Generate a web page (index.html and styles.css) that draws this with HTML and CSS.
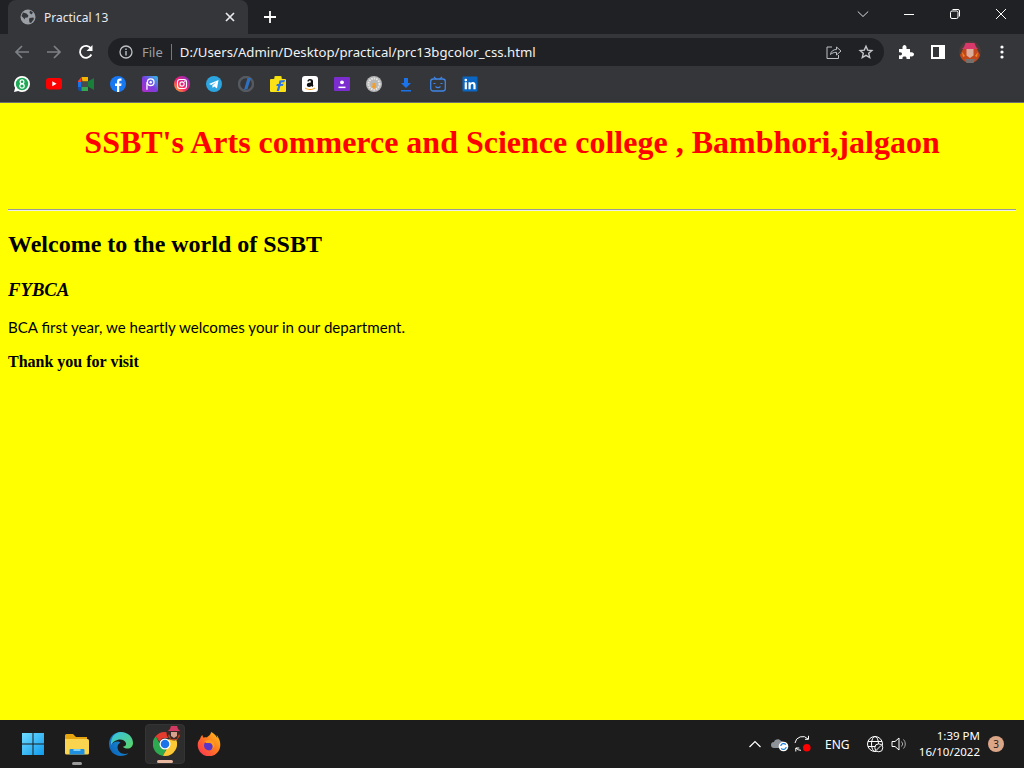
FILE: index.html
```html
<!DOCTYPE html>
<html lang="en">
<head>
<meta charset="utf-8">
<title>Practical 13</title>
<link rel="stylesheet" href="styles.css">
</head>
<body>
<div class="screen">
  <header class="chrome">
    <div class="tabstrip">
      <div class="tab">
        <svg class="i16" viewBox="0 0 16 16"><circle cx="8" cy="8" r="7.5" fill="#9aa0a6"/><path d="M3 3.500l3.500 1 2 2.200-1 1.800-2.500.2-.2 1.800L3 8.500 1.500 7zM10 1.500l3 2-1.500 2L9.500 4zM9.500 9l3.800-.5.7 1.500-3 4-1.500-.5-.5-2.500z" fill="#35363a"/></svg>
        <span class="tab-title">Practical 13</span>
        <svg class="tab-close" viewBox="0 0 10 10"><path d="M1 1l8 8M9 1l-8 8" stroke="#e8eaed" stroke-width="1.7"/></svg>
      </div>
      <svg class="newtab" viewBox="0 0 12 12"><path d="M6 0v12M0 6h12" stroke="#fff" stroke-width="1.8"/></svg>
      <div class="winctl">
        <span class="winbtn"><svg class="i12" viewBox="0 0 12 12"><path d="M.8 3.500L6 8.500l5.200-5" fill="none" stroke="#dadce0"/></svg></span>
        <span class="winbtn"><svg class="i12" viewBox="0 0 12 12"><path d="M1 6.500h10" stroke="#fff"/></svg></span>
        <span class="winbtn"><svg class="i12" viewBox="0 0 12 12"><rect x="1.500" y="3" width="7.500" height="7.500" rx="1.500" fill="none" stroke="#fff"/><path d="M3.500 1.500h5.500a1.500 1.500 0 0 1 1.500 1.500v5.500" fill="none" stroke="#fff"/></svg></span>
        <span class="winbtn"><svg class="i12" viewBox="0 0 12 12"><path d="M1 1l10 10M11 1L1 11" stroke="#fff"/></svg></span>
      </div>
    </div>
    <div class="toolbar">
      <span class="navbtn"><svg class="i16" viewBox="0 0 16 16"><path d="M15 8H2M8 2L2 8l6 6" fill="none" stroke="#7d8085" stroke-width="1.700"/></svg></span>
      <span class="navbtn"><svg class="i16" viewBox="0 0 16 16"><path d="M1 8h13M8 2l6 6-6 6" fill="none" stroke="#7d8085" stroke-width="1.700"/></svg></span>
      <span class="navbtn"><svg class="i16" viewBox="0 0 16 16"><path d="M13.400 10.500A6 6 0 1 1 13 4.500" fill="none" stroke="#fff" stroke-width="1.800"/><path d="M14.500 1v6h-6z" fill="#fff"/></svg></span>
      <div class="omnibox">
        <svg class="i14 info" viewBox="0 0 14 14"><circle cx="7" cy="7" r="6" fill="none" stroke="#bdc1c6" stroke-width="1.300"/><path d="M7 6v4.500M7 3.400v1.500" stroke="#bdc1c6" stroke-width="1.400"/></svg>
        <span class="file">File</span>
        <span class="divider"></span>
        <span class="url">D:/Users/Admin/Desktop/practical/prc13bgcolor_css.html</span>
        <svg class="i16 share" viewBox="0 0 16 16"><path d="M6 3H1v11.500h11.500V11" fill="none" stroke="#bdc1c6"/><path d="M4.500 10.500C5 7 7.500 5.500 10.500 5.500V3l4.500 4-4.500 4V8.300C8 8.300 6 9 4.500 10.500z" fill="none" stroke="#bdc1c6"/></svg>
        <svg class="i16 star" viewBox="0 0 16 16"><path d="M8 2.200l1.700 3.900 4.200.4-3.200 2.800 1 4.200L8 11.300l-3.700 2.200 1-4.200-3.200-2.800 4.200-.4z" fill="none" stroke="#c4c7cb" stroke-width="1.400"/></svg>
      </div>
      <div class="tools">
        <span class="toolbtn"><svg class="i16" viewBox="0 0 16 16"><path d="M1 5h3.500C4 2 5.500 1 6.500 1S9 2 8.500 5H12v3.300c3-.6 4 .7 4 2s-1 2.700-4 2V15H8.500c.5-2-.8-2.500-2-2.500s-2.500.6-2 2.500H1v-3.700c2.300.5 3-.7 3-1.600S3.300 7.800 1 8.300z" fill="#fff"/></svg></span>
        <span class="toolbtn"><svg class="i14" viewBox="0 0 14 14"><path d="M0 0h14v14H0zM2 2v10h6V2z" fill="#fff" fill-rule="evenodd"/></svg></span>
        <span class="toolbtn"><svg class="i22" viewBox="0 0 22 22"><circle cx="11" cy="11" r="11" fill="#4a3a38"/><path d="M1 14c1 4 5 8 10 8s9-4 10-8l-3-6H4z" fill="#c2481c"/><path d="M3 8h16l-2-2-1.500-4h-9L5 6z" fill="#d8396a"/><path d="M7.500 8h7v6.500L11 17l-3.500-2.500z" fill="#dcae9e"/><path d="M6 18h10l-1.500 4h-7z" fill="#75706c"/><path d="M3 11l3 4-2 1zM19 11l-3 4 2 1z" fill="#f08a20"/></svg></span>
        <span class="toolbtn"><svg class="i16" viewBox="0 0 16 16"><circle cx="8" cy="3" r="1.600" fill="#fff"/><circle cx="8" cy="8" r="1.600" fill="#fff"/><circle cx="8" cy="13" r="1.600" fill="#fff"/></svg></span>
      </div>
    </div>
    <div class="bookmarks">
      <span class="bm"><svg class="i16" viewBox="0 0 16 16"><path d="M8 0a8 8 0 0 1 0 16 8 8 0 0 1-3.800-1L0 16l1.100-4A8 8 0 0 1 8 0z" fill="#fff"/><circle cx="8" cy="8" r="6.200" fill="#1fa855"/><circle cx="8" cy="5.700" r="1.900" fill="none" stroke="#fff" stroke-width="1.200"/><circle cx="8" cy="10" r="2.200" fill="none" stroke="#fff" stroke-width="1.200"/></svg></span>
      <span class="bm"><svg class="i16" viewBox="0 0 16 16"><rect y="2" width="16" height="11.500" rx="3" fill="#f00"/><path d="M6.300 5.300v5l4.300-2.500z" fill="#fff"/></svg></span>
      <span class="bm"><svg class="i16" viewBox="0 0 16 16"><path d="M3.500 1H10v4.500H4.500z" fill="#f4b400"/><path d="M0 5l3.500-4v5H0z" fill="#ea4335"/><path d="M0 6h3.500v5H0z" fill="#1a73e8"/><path d="M0 11h3.500v4H2a2 2 0 0 1-2-2z" fill="#174ea6"/><path d="M3.500 11H10v4H3.500z" fill="#34a853"/><path d="M3.500 5.500H10v5.500H3.500z" fill="#4a4b4d"/><path d="M10 5.500L16 2v12l-6-3.500z" fill="#188038"/></svg></span>
      <span class="bm"><svg class="i16" viewBox="0 0 16 16"><circle cx="8" cy="8" r="8" fill="#1778f2"/><path d="M7 16V10H5V7.500h2V5.700C7 3.500 8.300 2.500 10 2.500c.8 0 1.500.1 1.500.1v2.100h-1c-1 0-1.200.6-1.200 1.200v1.600h2.300L11.200 10h-2v6z" fill="#fff"/></svg></span>
      <span class="bm"><svg class="i16" viewBox="0 0 16 16"><defs><linearGradient id="pa" x1="0" y1="1" x2="1" y2="0"><stop offset="0" stop-color="#b32cc4"/><stop offset=".5" stop-color="#7a3fe0"/><stop offset="1" stop-color="#2bc4ea"/></linearGradient></defs><rect width="16" height="16" rx="2" fill="url(#pa)"/><circle cx="8.700" cy="6.200" r="3.300" fill="none" stroke="#fff" stroke-width="1.300"/><circle cx="8.700" cy="6.200" r="1.200" fill="#fff"/><path d="M4.300 6.200v7.500h1.300V6.200z" fill="#fff"/></svg></span>
      <span class="bm"><svg class="i16" viewBox="0 0 16 16"><defs><linearGradient id="ig" x1="0" y1="1" x2="1" y2="0"><stop offset="0" stop-color="#ffc42e"/><stop offset=".45" stop-color="#f5206a"/><stop offset="1" stop-color="#7b2fe0"/></linearGradient></defs><circle cx="8" cy="8" r="8" fill="url(#ig)"/><rect x="3.500" y="3.500" width="9" height="9" rx="2.500" fill="none" stroke="#fff" stroke-width="1.100"/><circle cx="8" cy="8" r="2.100" fill="none" stroke="#fff" stroke-width="1.100"/><circle cx="10.800" cy="5.200" r=".7" fill="#fff"/></svg></span>
      <span class="bm"><svg class="i16" viewBox="0 0 16 16"><circle cx="8" cy="8" r="8" fill="#2ca5e0"/><path d="M3 8l9.500-4-1.500 8.500-2.800-2-1.500 1.500-.4-2.600 4-3.400-5 3z" fill="#fff"/></svg></span>
      <span class="bm"><svg class="i16" viewBox="0 0 16 16"><circle cx="8" cy="8" r="7" fill="none" stroke="#555a60" stroke-width="2.400"/><path d="M6 14l3.500-12h3.500L9.500 13z" fill="#2f6fbf"/></svg></span>
      <span class="bm"><svg class="i16" viewBox="0 0 16 16"><path d="M4 3.500L5 0h6l1 3.500z" fill="#f6e30f" stroke="#d8c400" stroke-width=".5"/><rect y="3" width="16" height="13" rx="1" fill="#fbe216"/><path d="M9.500 4.500L15 4l-.7 2.200-3 .2-.4 1.600 2.700-.2-.6 2-2.600.2L9 15H6.600l1.500-5-1.800.1.600-2 1.800-.1z" fill="#2874f0"/></svg></span>
      <span class="bm"><svg class="i16" viewBox="0 0 16 16"><rect width="16" height="16" rx="3" fill="#fff"/><path d="M5.300 5.200C5.500 3.500 7 3 8.300 3c1.500 0 2.700.7 2.700 2.300v3.300c0 .6.300 1 .5 1.200l-1.200 1.100-.9-.9c-1.500 1.500-4.600 1.300-4.600-1 0-2 2-2.500 4-2.600V5.500c0-1-1.700-1.300-2-.1z" fill="#111"/><path d="M3 12c3 2 7 2 10 0" fill="none" stroke="#f90" stroke-width="1"/></svg></span>
      <span class="bm"><svg class="i16" viewBox="0 0 16 16"><rect y="1" width="16" height="14" rx="1" fill="#7b2dd0"/><circle cx="8" cy="6.300" r="1.900" fill="#fff"/><path d="M4.500 10.600h7v1.500h-7z" fill="#fff"/></svg></span>
      <span class="bm"><svg class="i16" viewBox="0 0 16 16"><circle cx="8" cy="8" r="8" fill="#b7b7b7"/><circle cx="8" cy="8" r="5.500" fill="none" stroke="#e8e8e8" stroke-width="2" stroke-dasharray="1.500 1"/><path d="M6.500 7h3v3l1 .3L8 13.500 5.500 10.300l1-.3z" fill="#f0a030"/></svg></span>
      <span class="bm"><svg class="i16" viewBox="0 0 16 16"><path d="M6 2h4v5h3l-5 5-5-5h3zM3 14h10v1.400H3z" fill="#1a73e8"/></svg></span>
      <span class="bm"><svg class="i16" viewBox="0 0 16 16"><path d="M4 .8l2.500 2.500M12 .8L9.500 3.300" stroke="#3f86e8" stroke-width="1.200"/><rect x=".7" y="3" width="14.600" height="12" rx="2.500" fill="none" stroke="#3f86e8" stroke-width="1.300"/><path d="M3.500 7.500h2M10.500 7.500h2M5.500 10.500c1.500 1.500 3.500 1.500 5 0" fill="none" stroke="#3f86e8" stroke-width="1.100"/></svg></span>
      <span class="bm"><svg class="i16" viewBox="0 0 16 16"><rect x=".5" y=".5" width="15" height="15" rx="1" fill="#0a66c2"/><path d="M2.700 6.300h2.200v7H2.700zM3.800 2.800a1.300 1.300 0 1 1 0 2.600 1.300 1.300 0 0 1 0-2.600zM6.500 6.300h2.100v1c.5-.8 1.300-1.200 2.300-1.200 2 0 2.700 1.300 2.700 3.200v4h-2.200V9.800c0-1-.3-1.700-1.200-1.700-1 0-1.500.7-1.500 1.800v3.400H6.500z" fill="#fff"/></svg></span>
    </div>
  </header>

  <main class="page">
    <h1 class="title">SSBT's Arts commerce and Science college , Bambhori,jalgaon</h1>
    <hr class="rule">
    <h2 class="welcome">Welcome to the world of SSBT</h2>
    <h3 class="course">FYBCA</h3>
    <p class="intro">BCA first year, we heartly welcomes your in our department.</p>
    <p class="thanks">Thank you for visit</p>
  </main>

  <footer class="taskbar">
    <div class="apps">
      <span class="app"><svg class="i24" viewBox="0 0 24 24"><defs><linearGradient id="w" x1="0" y1="0" x2="1" y2="1"><stop offset="0" stop-color="#6fdcff"/><stop offset="1" stop-color="#0f9aee"/></linearGradient></defs><path d="M1 1h10.500v10.500H1zM12.500 1H23v10.500H12.500zM1 12.500h10.500V23H1zM12.500 12.500H23V23H12.500z" fill="url(#w)"/></svg></span>
      <span class="app open"><svg class="i24" viewBox="0 0 24 24"><path d="M0 3.500A1.500 1.500 0 0 1 1.500 2H8l3 3h11v5H0z" fill="#e5a50f"/><path d="M0 7h22.500A1.500 1.500 0 0 1 24 8.500V21a1.500 1.500 0 0 1-1.500 1.500h-21A1.500 1.500 0 0 1 0 21z" fill="#fbd44f"/><path d="M5.500 17h13a1 1 0 0 1 1 1v4.500h-15V18a1 1 0 0 1 1-1z" fill="#1f8fe0"/><path d="M8.500 17h7v2h-7z" fill="#7fd0f7"/></svg></span>
      <span class="app"><svg class="i24" viewBox="0 0 24 24"><defs><linearGradient id="e1" x1="0" y1="1" x2="1" y2="0"><stop offset="0" stop-color="#0a5fb8"/><stop offset="1" stop-color="#1fa0dc"/></linearGradient><linearGradient id="e2" x1="0" y1="0" x2="1" y2="1"><stop offset="0" stop-color="#35c1e8"/><stop offset="1" stop-color="#5cd662"/></linearGradient></defs><path d="M12 0C5 0 0 5.500 0 12c0 7 5.500 12 11.500 12 3.500 0 6-1 8-2.800-5 2-11-.5-11-6 0-2.500 1.500-4 3-4.500-2-2-6-1.500-8 1C4.500 5 8 2.500 12 2.500z" fill="url(#e1)"/><path d="M12 0c7 0 12 5 12 11 0 3.500-2.500 5.500-5.500 5.500-2 0-4-.8-4.500-1.800 2-.3 3.500-1.500 3-3.500-.8-3-4.500-4.500-8-3.500C5 9 3 10.500 2 13 1.500 5 6.500 0 12 0z" fill="url(#e2)"/></svg></span>
      <span class="app active"><svg class="i24" viewBox="0 0 24 24"><path d="M12 0a12 12 0 0 1 10.400 6H12a6 6 0 0 0-5.600 3.800L2.600 4.300A12 12 0 0 1 12 0z" fill="#e33b2e"/><path d="M2.600 4.300l5.200 9a6 6 0 0 0 5.700 3.500L9.800 23.800A12 12 0 0 1 2.600 4.300z" fill="#2da94f"/><path d="M22.400 6a12 12 0 0 1-10.400 18l-2.200-.2 5.200-9a6 6 0 0 0-.5-7z" fill="#fcc934"/><circle cx="12" cy="12" r="5.500" fill="#fff"/><circle cx="12" cy="12" r="4.300" fill="#1a73e8"/></svg>
        <svg class="chrome-badge" viewBox="0 0 16 16"><circle cx="8" cy="8" r="7.500" fill="#3a2a28"/><path d="M2 6h12l-2-2-1-3H5L4 4z" fill="#d23a62"/><path d="M5 7h6v4l-3 2-3-2z" fill="#d9a28e"/><path d="M3 9l2 5h6l2-5 1 2-3 4H5l-3-4z" fill="#b9461f"/></svg>
      </span>
      <span class="app"><svg class="i24" viewBox="0 0 24 24"><defs><linearGradient id="ff" x1="0" y1="1" x2="1" y2="0"><stop offset="0" stop-color="#ff2a5c"/><stop offset=".55" stop-color="#ff7a1e"/><stop offset="1" stop-color="#ffc81e"/></linearGradient></defs><path d="M22 7c-.5-1.500-1.500-3-2.500-4 .5 1 .8 2 .8 3C18.500 2.500 16 1 14 0c0 3-2.500 3.500-4 5.500-1-.3-2.300-.2-3.200.3C6 5 5.500 4 5.500 3 4 4 3.500 5.500 3 7 1 9 .7 11 .7 13a11.300 11.300 0 0 0 22.600 0c0-2-.4-4.500-1.300-6z" fill="url(#ff)"/><circle cx="12" cy="13.500" r="5" fill="#5b35c9"/><path d="M7 10c2-2 4.500-2.300 6-2 3 .5 5 3 4.500 6-.5 2-2 3.500-4 4 3.500-2 2.500-6.500-1-7-1.500 0-2.500 .5-5-1z" fill="#ff9a1e"/></svg></span>
    </div>
    <div class="tray">
      <svg class="i14 t-chevron" viewBox="0 0 14 14"><path d="M1.500 10L7 4.500l5.500 5.500" fill="none" stroke="#fff" stroke-width="1.200"/></svg>
      <svg class="i18 t-cloud" viewBox="0 0 18 18"><path d="M3 13a3 3 0 0 1 0-6c.5-2.500 5-4 7-1 2 0 3 1 3 2.500V13z" fill="#8f9398"/><circle cx="12.500" cy="11.500" r="4.800" fill="#fff"/><path d="M9.800 11a2.800 2.800 0 0 1 5-1.300M15.200 12a2.800 2.800 0 0 1-5 1.300" fill="none" stroke="#1a7fd8" stroke-width="1.300"/></svg>
      <svg class="i18 t-sync" viewBox="0 0 18 18"><path d="M1 8a7.500 7.500 0 0 1 13-4M14.500.8v3.500H11M7 15.300A6 6 0 0 1 2 13M1.800 16.500V13h3.500" fill="none" stroke="#fff"/><circle cx="12.800" cy="12.800" r="3.800" fill="#f00"/></svg>
      <span class="lang">ENG</span>
      <svg class="i18 t-globe" viewBox="0 0 18 18"><circle cx="9" cy="9" r="7.500" fill="none" stroke="#fff"/><ellipse cx="9" cy="9" rx="3.500" ry="7.500" fill="none" stroke="#fff"/><path d="M2 6.500h14M2 11.500h14" stroke="#fff"/><circle cx="12.800" cy="12.800" r="4" fill="#1c1c1c" stroke="#fff"/><path d="M10.500 15l4.500-4.500" stroke="#fff"/></svg>
      <svg class="i16 t-vol" viewBox="0 0 16 16"><path d="M1 5.500h3L8 2v12L4 10.500H1z" fill="none" stroke="#fff"/><path d="M10.500 5.500a3.500 3.500 0 0 1 0 5M12.500 3.500a6.500 6.500 0 0 1 0 9" fill="none" stroke="#aaa"/></svg>
      <div class="clock"><span>1:39 PM</span><span>16/10/2022</span></div>
      <span class="notif">3</span>
    </div>
  </footer>
</div>
</body>
</html>
```

FILE: styles.css
```css
* { box-sizing: border-box; }
html, body { margin: 0; padding: 0; height: 100%; }
body { overflow: hidden; }
svg { display: block; flex: none; }
.i12 { width: 12px; height: 12px; }
.i14 { width: 14px; height: 14px; }
.i16 { width: 16px; height: 16px; }
.i18 { width: 18px; height: 18px; }
.i22 { width: 22px; height: 22px; }
.i24 { width: 24px; height: 24px; }

.screen { width: 1024px; height: 768px; display: flex; flex-direction: column; }

.chrome { flex: none; height: 103px; background: #35363a; border-bottom: 1px solid #6e6f73; font-family: "Noto Sans", sans-serif; color: #e8eaed; }

.tabstrip { height: 34px; background: #202124; display: flex; align-items: center; padding-left: 8px; }
.tab { width: 240px; height: 34px; background: #35363a; border-radius: 8px 8px 0 0; display: flex; align-items: center; padding: 0 13px 0 12px; }
.tab-title { font-size: 12px; margin-left: 8px; flex: 1; white-space: nowrap; }
.tab-close { width: 10px; height: 10px; }
.newtab { width: 12px; height: 12px; margin-left: 16px; }
.winctl { margin-left: auto; display: flex; align-self: flex-start; padding-top: 8px; }
.winbtn { width: 46px; height: 12px; display: flex; justify-content: center; }

.toolbar { height: 36px; display: flex; align-items: center; padding-left: 6px; }
.navbtn { width: 32px; display: flex; justify-content: center; }
.omnibox { width: 776px; height: 28px; margin-left: 6px; background: #202124; border-radius: 14px; display: flex; align-items: center; padding: 0 10px 0 11px; }
.file { font-size: 13px; color: #9aa0a6; margin-left: 9px; }
.divider { width: 1px; height: 16px; background: #75787c; margin: 0 8px; }
.url { font-size: 13.2px; color: #f1f3f4; flex: 1; white-space: nowrap; }
.share { margin-right: 16px; }
.tools { display: flex; margin-left: 6px; align-items: center; }
.toolbtn { width: 32px; display: flex; justify-content: center; }

.bookmarks { height: 32px; display: flex; align-items: center; padding: 0 0 4px 6px; }
.bm { width: 32px; display: flex; justify-content: center; }

.page { flex: 1; background: #ff0; padding: 0 8px; color: #000; font-family: "Liberation Serif", serif; overflow: hidden; }
.title { font-size: 32px; line-height: 37px; margin: 21px 0 48px; text-align: center; color: #f00; font-weight: bold; }
.rule { margin: 0; border: 0; border-top: 1px solid #9a9a9a; border-bottom: 1px solid #eeeeee; height: 2px; }
.welcome { font-size: 24px; line-height: 27px; margin: 20px 0 0; font-weight: bold; }
.course { font-size: 18.72px; line-height: 21px; margin: 21px 0 0; font-style: italic; font-weight: bold; }
.intro { font-family: "Lato", sans-serif; font-size: 15.12px; line-height: 18px; margin: 18px 0 0; }
.thanks { font-size: 16px; line-height: 18px; margin: 17px 0 0; font-weight: bold; }

.taskbar { flex: none; height: 48px; background: #1c1c1c; display: flex; align-items: center; justify-content: space-between; font-family: "Noto Sans", sans-serif; color: #fff; }
.apps { display: flex; padding-left: 11px; }
.app { width: 44px; height: 40px; display: flex; align-items: center; justify-content: center; position: relative; }
.app.open::after { content: ""; position: absolute; left: 17px; bottom: -1px; width: 10px; height: 3px; border-radius: 2px; background: #9a9a9a; }
.app.active { width: 40px; margin: 0 2px; background: #2d2d2d; border: 1px solid #343434; border-radius: 4px; }
.app.active::after { content: ""; position: absolute; left: 11px; bottom: 0; width: 16px; height: 3px; border-radius: 2px; background: #e8b8a0; }
.chrome-badge { position: absolute; width: 16px; height: 16px; left: 20px; top: 0; }
.tray { display: flex; align-items: center; padding-right: 20px; }
.t-chevron { margin-right: 9px; }
.t-cloud { margin-right: 5px; }
.lang { font-size: 12px; margin-left: 13px; width: 26px; }
.t-globe { margin-left: 15px; }
.t-vol { margin-left: 7px; }
.clock { width: 73px; display: flex; flex-direction: column; align-items: flex-end; font-size: 11.5px; line-height: 16px; }
.notif { position: relative; width: 16px; height: 16px; border-radius: 50%; margin-left: 8px; background: #dba588; color: #1c1c1c; font-size: 10px; line-height: 16px; text-align: center; }
```
